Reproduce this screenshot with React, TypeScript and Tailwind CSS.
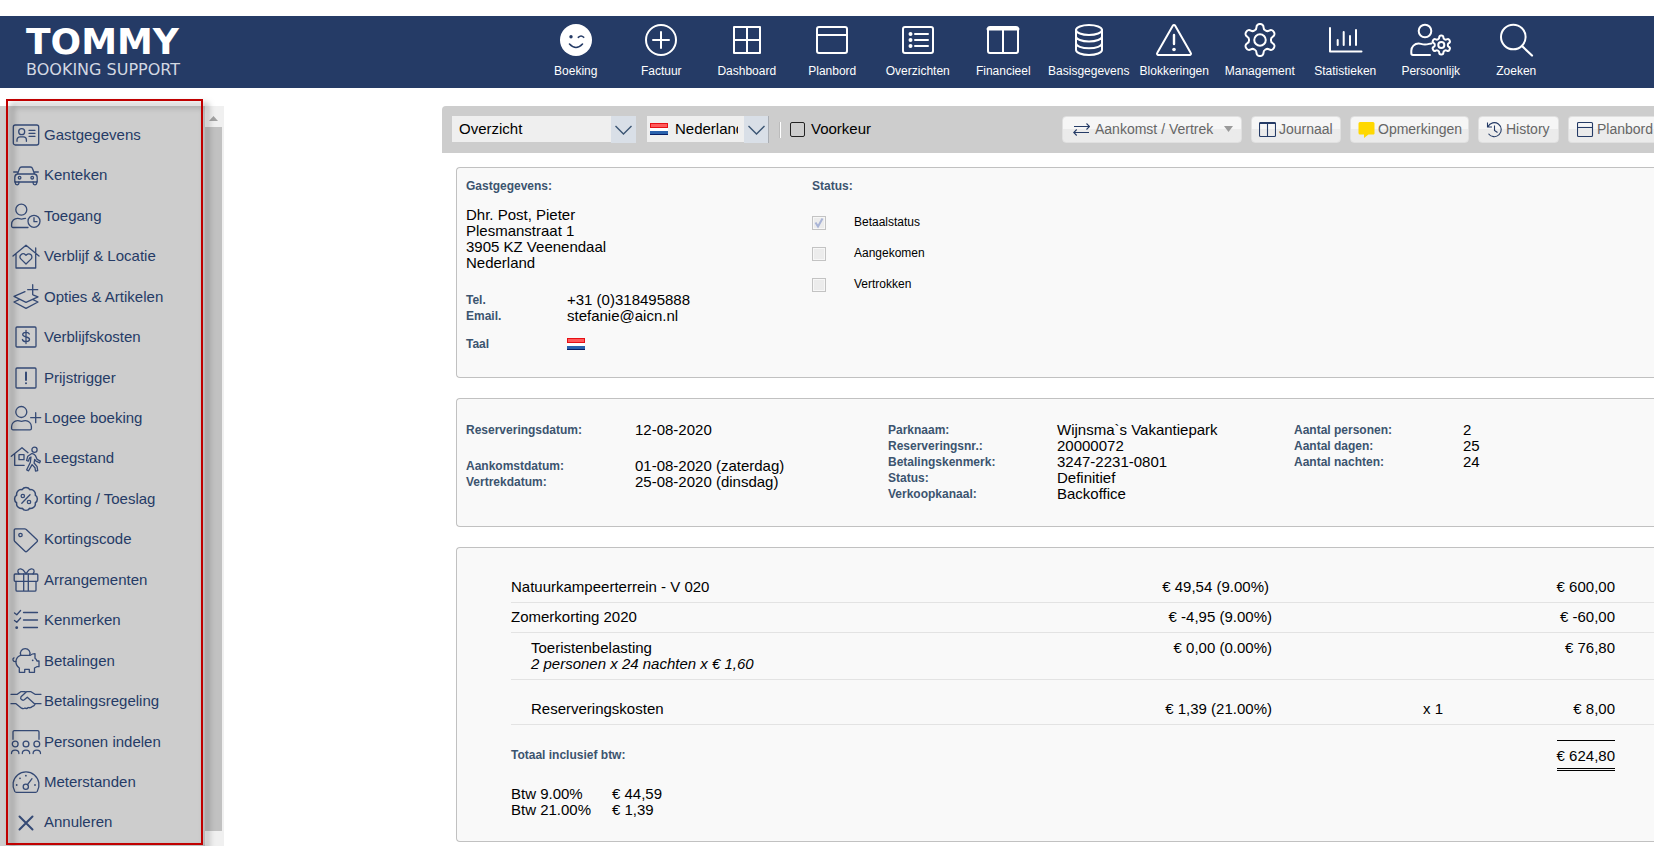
import type { ReactNode } from 'react';

const GEAR =
  'M12.22 2h-.44a2 2 0 0 0-2 2v.18a2 2 0 0 1-1 1.73l-.43.25a2 2 0 0 1-2 0l-.15-.08a2 2 0 0 0-2.73.73l-.22.38a2 2 0 0 0 .73 2.73l.15.1a2 2 0 0 1 1 1.72v.51a2 2 0 0 1-1 1.74l-.15.09a2 2 0 0 0-.73 2.73l.22.38a2 2 0 0 0 2.73.73l.15-.08a2 2 0 0 1 2 0l.43.25a2 2 0 0 1 1 1.73V20a2 2 0 0 0 2 2h.44a2 2 0 0 0 2-2v-.18a2 2 0 0 1 1-1.73l.43-.25a2 2 0 0 1 2 0l.15.08a2 2 0 0 0 2.73-.73l.22-.39a2 2 0 0 0-.73-2.73l-.15-.08a2 2 0 0 1-1-1.74v-.5a2 2 0 0 1 1-1.74l.15-.09a2 2 0 0 0 .73-2.73l-.22-.38a2 2 0 0 0-2.73-.73l-.15.08a2 2 0 0 1-2 0l-.43-.25a2 2 0 0 1-1-1.73V4a2 2 0 0 0-2-2z';

const BADGE =
  'M3.85 8.62a4 4 0 0 1 4.78-4.77 4 4 0 0 1 6.74 0 4 4 0 0 1 4.78 4.78 4 4 0 0 1 0 6.74 4 4 0 0 1-4.77 4.78 4 4 0 0 1-6.75 0 4 4 0 0 1-4.78-4.77 4 4 0 0 1 0-6.76Z';

type Item = { label: string; icon: ReactNode };

const NAV: Item[] = [
  {
    label: 'Boeking',
    icon: (
      <>
        <circle cx="16" cy="16" r="16" fill="white" stroke="none" />
        <circle cx="11" cy="12.7" r="1.7" fill="#253b66" stroke="none" />
        <path d="M18.3 13.3q2.8-2.6 5.4 0M9.500 20q6.500 7 13 0" stroke="#253b66" strokeWidth="1.6" />
      </>
    ),
  },
  { label: 'Factuur', icon: <><circle cx="16" cy="16" r="15" /><path d="M16 8v16M8 16h16" /></> },
  { label: 'Dashboard', icon: <path d="M3 3h26v26H3zM16 3v26M3 16h26" /> },
  { label: 'Planbord', icon: <><rect x="1" y="3" width="30" height="26" rx="2" /><path d="M1 11h30" /></> },
  {
    label: 'Overzichten',
    icon: (
      <>
        <rect x="1" y="3" width="30" height="26" rx="2" />
        <path d="M13 10h13M13 16h13M13 22h13" />
        <path d="M8.500 10v0M8.500 16v0M8.500 22v0" strokeWidth="4" />
      </>
    ),
  },
  {
    label: 'Financieel',
    icon: <><rect x="1" y="3" width="30" height="26" rx="2" /><path d="M1 5h30" strokeWidth="3" /><path d="M16 4v25" /></>,
  },
  {
    label: 'Basisgegevens',
    icon: (
      <>
        <ellipse cx="16" cy="6" rx="13" ry="5" />
        <path d="M3 6v20c0 2.800 5.800 5 13 5s13-2.200 13-5V6M3 12.500c0 2.800 5.800 5 13 5s13-2.200 13-5M3 19.300c0 2.800 5.800 5 13 5s13-2.200 13-5" />
      </>
    ),
  },
  {
    label: 'Blokkeringen',
    icon: (
      <>
        <path d="M14.800 1.700L-.8 29a1.300 1.300 0 0 0 1.100 2h31.400a1.300 1.300 0 0 0 1.100-2L17.200 1.700a1.400 1.400 0 0 0-2.400 0z" />
        <path d="M16 11v9" strokeWidth="2.400" />
        <path d="M16 25.500v0" strokeWidth="3.600" />
      </>
    ),
  },
  {
    label: 'Management',
    icon: <g transform="translate(-3.200 -3.200) scale(1.6)" strokeWidth="1.250"><path d={GEAR} /><circle cx="12" cy="12" r="3.600" /></g>,
  },
  { label: 'Statistieken', icon: <path d="M1 4v23.500h31.500M8.700 16v5M14.700 8v13M21 12v9M27 6v15" /> },
  {
    label: 'Persoonlijk',
    icon: (
      <>
        <circle cx="10" cy="7" r="6.300" />
        <path d="M15 31H-2a1.700 1.700 0 0 1-1.700-1.700v-2.500A7.300 7.300 0 0 1 3.600 19.500c2 0 3 1 6.400 1s4.400-1 6.400-1" />
        <g transform="translate(14.900 9.600) scale(.95)" strokeWidth="2.100"><path d={GEAR} /><circle cx="12" cy="12" r="3.200" /></g>
      </>
    ),
  },
  { label: 'Zoeken', icon: <><circle cx="13.300" cy="13" r="12.300" /><path d="M22 22l10 9.500" strokeWidth="2.200" /></> },
];

const MENU: Item[] = [
  {
    label: 'Gastgegevens',
    icon: (
      <>
        <rect x="2.300" y="4" width="25.400" height="20" rx="2" />
        <circle cx="10.700" cy="10.700" r="3" />
        <path d="M6 20.300v-1.500a3 3 0 0 1 3-3h3.400a3 3 0 0 1 3 3v1.500M18 9.300h6M18 12.300h6M18 15.300h6" />
      </>
    ),
  },
  {
    label: 'Kenteken',
    icon: (
      <>
        <path d="M6.500 12l2-5.500Q9 5 10.700 5h8.600Q21 5 21.500 6.500l2 5.500M6.500 12h17q2.700.500 2.700 3.500V20H3.800v-4.500q0-3 2.700-3.500zM2.700 10h3.600M23.700 10h3.600" />
        <path d="M4.300 20v1a1.700 1.700 0 0 0 3.600 0v-1M22.100 20v1a1.700 1.700 0 0 0 3.600 0v-1" />
        <circle cx="8.600" cy="15.700" r="1.300" />
        <circle cx="21.200" cy="15.700" r="1.300" />
      </>
    ),
  },
  {
    label: 'Toegang',
    icon: (
      <>
        <circle cx="10.300" cy="7.700" r="5.500" />
        <path d="M17 25.500H2a1.400 1.400 0 0 1-1.400-1.400v-1.800a6 6 0 0 1 6-6c1.500 0 2 .8 3.900.8s2.500-.8 4-.8" />
        <circle cx="23" cy="19.300" r="6" />
        <path d="M23 15.700v4h3" />
      </>
    ),
  },
  {
    label: 'Verblijf & Locatie',
    icon: (
      <>
        <path d="M2 13L15 2.200 28 13M5 11v14h19.700V11M24.700 9.500V5" />
        <path d="M15 21l-5-4.900a3.100 3.100 0 0 1 4.400-4.400l.6.600.6-.600a3.100 3.100 0 0 1 4.400 4.400z" />
      </>
    ),
  },
  {
    label: 'Opties & Artikelen',
    icon: <path d="M14 8.700L3 13.300l12 6 12-5.500-4.500-1.600M3 19l5-2.300M3 19l12 6.300L27 19l-5-2.300M21.700 1.700v10M16.700 6.700h10" />,
  },
  {
    label: 'Verblijfskosten',
    icon: (
      <>
        <rect x="5" y="4" width="20" height="20" rx="1" />
        <path d="M15 7.500v13M18.300 11c-.5-1.300-1.600-1.700-3.300-1.700-2 0-3.300.8-3.300 2.300 0 3.300 6.800 1.500 6.800 4.700 0 1.600-1.500 2.400-3.500 2.400s-3.200-.8-3.600-2.200" />
      </>
    ),
  },
  {
    label: 'Prijstrigger',
    icon: <><rect x="5" y="4" width="20" height="20" rx="1" /><path d="M15 8.500v7.500M15 19.300v0" strokeWidth="2" /></>,
  },
  {
    label: 'Logee boeking',
    icon: (
      <>
        <circle cx="10.300" cy="8" r="5.500" />
        <path d="M2 25.800h17a1.400 1.400 0 0 0 1.400-1.400v-1.800a6 6 0 0 0-6-6c-1.500 0-2 .8-3.900.8s-2.500-.8-3.900-.8a6 6 0 0 0-6 6v1.800A1.400 1.400 0 0 0 2 25.800zM24.700 8.700v10M19.700 13.700h10" />
      </>
    ),
  },
  {
    label: 'Leegstand',
    icon: (
      <>
        <path d="M.3 11.300L11 2.700l6 5M3.700 9v11.300h9.500" />
        <rect x="8" y="9.700" width="5" height="5" />
        <circle cx="23.500" cy="4.700" r="2.600" />
        <path d="M20.500 8.700l-3.700 2.500-1.200 4.300 1.700.7 1.400-3.500 1.300-.7-.7 5.500-3.600 7.300 1.900 1 3.500-6.200 2.900 3.200.5 3.200 2.200-.3-.6-4-3-3.700.6-3.700 1.300 1.800 3.700 1.700.7-1.700-3.200-1.700-1.700-3.700q-2-2.500-4-2z" />
      </>
    ),
  },
  {
    label: 'Korting / Toeslag',
    icon: (
      <>
        <path d={BADGE} transform="translate(1.300 .3) scale(1.140)" />
        <circle cx="11.800" cy="11" r="1.700" />
        <circle cx="18" cy="17" r="1.700" />
        <path d="M19 9.700l-8.200 8.600" />
      </>
    ),
  },
  {
    label: 'Kortingscode',
    icon: (
      <>
        <path d="M4.500 2.800h9.200q.8 0 1.300.5l11 10.500q1 1 0 2L16 25.300q-1 1-2 0L3.800 15.500q-.6-.6-.6-1.400V4.100q0-1.300 1.300-1.300z" />
        <circle cx="9.500" cy="9" r="1.700" />
      </>
    ),
  },
  {
    label: 'Arrangementen',
    icon: (
      <>
        <rect x="3.200" y="8" width="23.600" height="7.300" rx="1" />
        <path d="M5 15.300V24a1.200 1.200 0 0 0 1.200 1.200h17.600A1.200 1.200 0 0 0 25 24v-8.700M12.700 8v17M17.300 8v17M8 8C5.500 4.500 7.500 2.700 9.700 2.900 12.500 3.200 13.500 5.500 15 8c1.500-2.500 2.500-4.800 5.300-5.100 2.200-.2 4.200 1.600 1.700 5.100" />
      </>
    ),
  },
  {
    label: 'Kenmerken',
    icon: (
      <>
        <path d="M3.500 7l2.300 1.800 3.800-4.300M3.500 14.500l2.300 1.800 3.800-4.300M12.500 6.500h14M12.500 14h14M12.500 21.500h14" />
        <path d="M5.700 21.700v0" strokeWidth="2.800" />
      </>
    ),
  },
  {
    label: 'Betalingen',
    icon: (
      <>
        <path d="M9.500 8.300h9.800q2-1.600 4.700-1.600v4.600q1.500 1 2 2.700h2v5.700h-2.200L23.500 21v4.300h-5.200v-3h-4.600v3H8.300V21C5.500 19 4.700 16.500 5 14q.700-4.500 4.500-5.700z" />
        <path d="M9.700 8a4.800 4.800 0 1 1 9 0M4.800 14.500C1.500 15 1.200 11.500 3 10.800" />
        <path d="M21.700 13.300v0" strokeWidth="1.800" />
      </>
    ),
  },
  {
    label: 'Betalingsregeling',
    icon: (
      <path d="M0 7.300h6.300L9.700 4.700h4.500M30 7.300h-6l-4-2.600h-4.500L10 9.800c-1.300 2.200 1.300 4.300 3.300 3l3-2.500 7.700 7M0 16.700h5l5.500 4.500q2 1 3.500-.2 1.600 1.300 3.300-.5 2.500.8 4-1 2 0 2.700-2.800h6" />
    ),
  },
  {
    label: 'Personen indelen',
    icon: (
      <>
        <path d="M2 11.300v-7.300a1.300 1.300 0 0 1 1.300-1.300h23.400A1.300 1.300 0 0 1 28 4v7.300" />
        <circle cx="4.200" cy="16" r="2.900" />
        <circle cx="15" cy="16" r="2.900" />
        <circle cx="25.800" cy="16" r="2.900" />
        <path d="M.5 25.500c0-2 1.500-3.300 3.700-3.300s3.700 1.300 3.700 3.300M11.300 25.500c0-2 1.500-3.300 3.700-3.300s3.700 1.300 3.700 3.300M22.100 25.500c0-2 1.500-3.300 3.700-3.300s3.700 1.300 3.700 3.300" />
      </>
    ),
  },
  {
    label: 'Meterstanden',
    icon: (
      <>
        <path d="M5.300 24.300q-1 0-1.500-.8a13 13 0 1 1 22.400 0q-.5.800-1.500.8z" />
        <circle cx="14.800" cy="18.700" r="2.600" />
        <path d="M16.500 16.700l4.500-6" />
        <path d="M5.700 17v0M9 10.300v0M14.900 7.700v0M24 17v0" strokeWidth="1.800" />
      </>
    ),
  },
  { label: 'Annuleren', icon: <path d="M8.500 7.500l13 13M21.500 7.500l-13 13" strokeWidth="2" /> },
];

const STATUSES = [
  { id: 'betaalstatus', label: 'Betaalstatus', checked: true },
  { id: 'aangekomen', label: 'Aangekomen', checked: false },
  { id: 'vertrokken', label: 'Vertrokken', checked: false },
];

function Flag() {
  return (
    <svg width="18" height="12" viewBox="0 0 18 12" role="img" aria-label="Nederland" className="shrink-0">
      <path fill="#e60f14" d="M0 0h18v5H0z" />
      <path fill="#ff5a5a" d="M1 1h16v3H1z" />
      <path fill="#fff" d="M0 5h18v3H0z" />
      <path fill="#2a62ad" d="M0 8h18v4H0z" />
      <path fill="#071f66" d="M0 11h18v1H0z" />
    </svg>
  );
}

function Chevron({ className }: { className: string }) {
  return (
    <span className={`pointer-events-none absolute right-0 top-0 flex h-[27px] w-[25px] items-center justify-center bg-[#d9dfe7] ${className}`}>
      <svg width="17" height="10" viewBox="0 0 17 10" fill="none" stroke="#3b5573" strokeWidth="1.400">
        <path d="M.5 1l8 8 8-8" />
      </svg>
    </span>
  );
}

function ToolButton({ className, icon, children }: { className: string; icon: ReactNode; children: ReactNode }) {
  return (
    <button
      type="button"
      className={`flex h-[27px] shrink-0 items-center whitespace-nowrap border border-[#e0e0e0] bg-linear-to-b from-[#f6f6f6] from-50% to-[#ebebeb] to-50% pb-px text-sm text-[#666] ${className}`}
    >
      <svg width="17" height="17" viewBox="0 0 17 17" fill="none" stroke="#253b66" strokeWidth="1.100" className="shrink-0">
        {icon}
      </svg>
      {children}
    </button>
  );
}

function Field({ label, children }: { label: string; children: ReactNode }) {
  return (
    <>
      <dt className="text-xs font-bold leading-4 text-[#3c546f]">{label}</dt>
      <dd className="leading-4">{children}</dd>
    </>
  );
}

function Toolbar() {
  return (
    <div className="flex h-[47px] items-start rounded-tl bg-[#cdcdcd] pl-[10px] pt-[10px]">
      <div className="relative w-[184px] shrink-0">
        <select aria-label="Weergave" className="h-[26px] w-full appearance-none bg-[#efefef] pl-[7px] pr-[30px] outline-none">
          <option>Overzicht</option>
        </select>
        <Chevron className="" />
      </div>
      <div className="relative ml-[11px] flex h-[26px] w-[122px] shrink-0 items-center bg-[#efefef] pl-[3px]">
        <Flag />
        <select aria-label="Taal" className="h-[26px] w-[70px] appearance-none pl-[7px] outline-none">
          <option>Nederlands</option>
        </select>
        <Chevron className="border-r border-[#a9adb3]" />
      </div>
      <span className="ml-[10px] mt-[6px] h-4 w-[2px] shrink-0 border-l border-[#bcbcbc] bg-white" />
      <label className="ml-[9px] mt-[3px] flex shrink-0 items-center gap-[6px] leading-5">
        <input type="checkbox" className="size-[15px] appearance-none rounded-xs border border-[#222]" />
        Voorkeur
      </label>

      <div className="ml-auto flex gap-[9px]">
        <ToolButton
          className="w-[180px] gap-[5px] rounded-sm pl-[10px]"
          icon={<path d="M1 5.500h15.500M13.500 2.500l3 3-3 3M16 11.500H.7M3.700 8.500l-3 3 3 3" />}
        >
          Aankomst / Vertrek
          <svg width="9" height="6" viewBox="0 0 9 6" className="ml-[6px]"><path d="M0 0h9L4.500 6z" fill="#9a9a9a" /></svg>
        </ToolButton>
        <ToolButton
          className="w-[90px] gap-[3px] rounded-sm pl-[7px]"
          icon={<><rect x=".5" y="1.500" width="16" height="14" rx="1" /><path d="M1 2h15" strokeWidth="2" /><path d="M8.500 2v13" /></>}
        >
          Journaal
        </ToolButton>
        <ToolButton
          className="w-[119px] gap-[3px] rounded-sm pl-[7px]"
          icon={<path d="M2 1h13a1.500 1.500 0 0 1 1.500 1.500v9A1.500 1.500 0 0 1 15 13.500h-4.500L6 17v-3.500H2A1.500 1.500 0 0 1 .5 12V2.500A1.500 1.500 0 0 1 2 1z" fill="#ffd800" stroke="none" />}
        >
          Opmerkingen
        </ToolButton>
        <ToolButton
          className="w-[81px] gap-[3px] rounded-sm pl-[7px]"
          icon={<path d="M2 5.500a7 7 0 1 1 .5 7.200M1.500 1.500V6H6M8.500 4.500v5l3 2" />}
        >
          History
        </ToolButton>
        <ToolButton
          className="w-[86px] gap-[3px] rounded-l-sm border-r-0 pl-[8px]"
          icon={<><rect x=".5" y="1.500" width="15" height="14" rx="1" /><path d="M1 6.500h15" /></>}
        >
          Planbord
        </ToolButton>
      </div>
    </div>
  );
}

function GuestCard() {
  return (
    <section className="flex rounded-l border border-r-0 border-[#c1c1c1] bg-[#f9f9f9] pb-[25px] pl-[9px] pt-[10px]">
      <div className="w-[346px] shrink-0">
        <h2 className="text-xs font-bold leading-4 text-[#3c546f]">Gastgegevens:</h2>
        <address className="mt-[13px] not-italic leading-4">
          Dhr. Post, Pieter<br />
          Plesmanstraat 1<br />
          3905 KZ Veenendaal<br />
          Nederland
        </address>
        <dl className="mt-[21px] grid grid-cols-[101px_1fr]">
          <Field label="Tel.">+31 (0)318495888</Field>
          <Field label="Email.">stefanie@aicn.nl</Field>
        </dl>
        <dl className="mt-3 grid grid-cols-[101px_1fr]">
          <Field label="Taal"><span className="flex h-4 items-center"><Flag /></span></Field>
        </dl>
      </div>
      <fieldset>
        <legend className="text-xs font-bold leading-4 text-[#3c546f]">Status:</legend>
        <div className="mt-5 flex flex-col gap-[15px]">
          {STATUSES.map(s => (
            <div key={s.id} className="flex h-4 items-start">
              <span className="relative mt-[2px] flex">
                <input
                  id={s.id}
                  type="checkbox"
                  disabled
                  checked={s.checked}
                  readOnly
                  className="size-[14px] appearance-none border border-[#c3c3c3] bg-[#ececec] shadow-[inset_0_0_0_1px_#f7f7f7]"
                />
                {s.checked && (
                  <svg width="14" height="14" viewBox="0 0 14 14" className="pointer-events-none absolute left-0 top-0" fill="none" stroke="#a9b4d6" strokeWidth="2">
                    <path d="M3.500 6.500L6 10.500l4.500-8" />
                  </svg>
                )}
              </span>
              <label htmlFor={s.id} className="ml-7 text-xs">{s.label}</label>
            </div>
          ))}
        </div>
      </fieldset>
    </section>
  );
}

function ReservationCard() {
  return (
    <section className="flex rounded-l border border-r-0 border-[#c1c1c1] bg-[#f9f9f9] pb-6 pl-[9px] pt-[23px]">
      <div className="w-[422px] shrink-0">
        <dl className="grid grid-cols-[169px_1fr]">
          <Field label="Reserveringsdatum:">12-08-2020</Field>
        </dl>
        <dl className="mt-5 grid grid-cols-[169px_1fr]">
          <Field label="Aankomstdatum:">01-08-2020 (zaterdag)</Field>
          <Field label="Vertrekdatum:">25-08-2020 (dinsdag)</Field>
        </dl>
      </div>
      <dl className="grid w-[406px] shrink-0 grid-cols-[169px_1fr]">
        <Field label="Parknaam:">Wijnsma`s Vakantiepark</Field>
        <Field label="Reserveringsnr.:">20000072</Field>
        <Field label="Betalingskenmerk:">3247-2231-0801</Field>
        <Field label="Status:">Definitief</Field>
        <Field label="Verkoopkanaal:">Backoffice</Field>
      </dl>
      <dl className="grid grid-cols-[169px_1fr] content-start">
        <Field label="Aantal personen:">2</Field>
        <Field label="Aantal dagen:">25</Field>
        <Field label="Aantal nachten:">24</Field>
      </dl>
    </section>
  );
}

function CostsCard() {
  return (
    <section className="rounded-l border border-r-0 border-[#c1c1c1] bg-[#f9f9f9] pb-[23px] pl-[54px] pt-[25px]">
      <table className="w-full table-fixed border-separate border-spacing-0 leading-4 [&_td]:align-top">
        <colgroup>
          <col />
          <col className="w-[200px]" />
          <col className="w-[171px]" />
          <col className="w-[172px]" />
          <col className="w-[39px]" />
        </colgroup>
        <tbody className="[&_td]:border-b [&_td]:border-[#e3e3e3] [&_td]:pb-[7px] [&_td]:pt-[6px]">
          <tr>
            <td>Natuurkampeerterrein - V 020</td>
            <td className="pr-[3px] text-right">€ 49,54 (9.00%)</td>
            <td />
            <td className="text-right">€ 600,00</td>
            <td />
          </tr>
          <tr>
            <td>Zomerkorting 2020</td>
            <td className="text-right">€ -4,95 (9.00%)</td>
            <td />
            <td className="text-right">€ -60,00</td>
            <td />
          </tr>
          <tr className="[&>td]:pt-[7px]!">
            <td>
              <div className="pl-5">Toeristenbelasting<br /><em>2 personen x 24 nachten x € 1,60</em></div>
            </td>
            <td className="text-right">€ 0,00 (0.00%)</td>
            <td />
            <td className="text-right">€ 76,80</td>
            <td />
          </tr>
          <tr className="[&>td]:pt-[21px]!">
            <td><div className="pl-5">Reserveringskosten</div></td>
            <td className="text-right">€ 1,39 (21.00%)</td>
            <td className="text-right">x 1</td>
            <td className="text-right">€ 8,00</td>
            <td />
          </tr>
        </tbody>
        <tfoot>
          <tr>
            <th scope="row" colSpan={3} className="pt-[22px] text-left align-top text-xs font-bold leading-4 text-[#3c546f]">
              Totaal inclusief btw:
            </th>
            <td className="pt-[15px] text-right">
              <span className="inline-block border-b-3 border-t border-double border-black pb-[4px] pt-[7px] align-top [border-top-style:solid]">
                € 624,80
              </span>
            </td>
            <td />
          </tr>
        </tfoot>
      </table>
      <dl className="mt-[15px] grid grid-cols-[101px_1fr] leading-4">
        <dt>Btw 9.00%</dt>
        <dd>€ 44,59</dd>
        <dt>Btw 21.00%</dt>
        <dd>€ 1,39</dd>
      </dl>
    </section>
  );
}

export default function App() {
  return (
    <div className="overflow-hidden bg-white pt-4 font-['Liberation_Sans',Arial,sans-serif] text-[15px] text-black">
      <header className="flex h-[72px] justify-between bg-[#253b66] pl-[26px] pr-[95px] text-white">
        <a href="#" className="flex flex-col pt-2 font-['DejaVu_Sans',sans-serif]">
          <span className="text-4xl font-bold leading-9">TOMMY</span>
          <span className="text-base leading-5 text-[#d3d8e2]">BOOKING SUPPORT</span>
        </a>
        <nav className="grid w-[1026px] grid-cols-12">
          {NAV.map(item => (
            <a key={item.label} href="#" className="flex flex-col items-center pt-2 text-xs">
              <svg
                width="32"
                height="32"
                viewBox="0 0 32 32"
                fill="none"
                stroke="currentColor"
                strokeWidth="2"
                strokeLinecap="round"
                strokeLinejoin="round"
                className="overflow-visible"
              >
                {item.icon}
              </svg>
              <span className="mt-[7px]">{item.label}</span>
            </a>
          ))}
        </nav>
      </header>

      <div className="flex pt-[18px]">
        <aside className="relative flex h-[calc(100vh-106px)] w-[224px] shrink-0">
          <ul className="flex w-[205px] flex-col bg-[#cdcdcd] pb-[3px] pl-[11px] pt-[9px]">
            {MENU.map(item => (
              <li key={item.label} className="flex flex-1 items-center">
                <a href="#" className="flex items-center gap-[3px] text-[#253b66]">
                  <svg
                    width="30"
                    height="28"
                    viewBox="0 0 30 28"
                    fill="none"
                    stroke="#354a75"
                    strokeWidth="1.300"
                    strokeLinecap="round"
                    strokeLinejoin="round"
                    className="overflow-visible"
                  >
                    {item.icon}
                  </svg>
                  {item.label}
                </a>
              </li>
            ))}
          </ul>
          <div className="flex w-[19px] flex-col bg-[#f0f0f0] pb-[15px]">
            <div className="flex h-[21px] shrink-0 items-center pl-1 pt-[3px]">
              <svg width="9" height="5" viewBox="0 0 9 5"><path d="M0 5h9L4.500 0z" fill="#a3a3a3" /></svg>
            </div>
            <div className="w-[17px] flex-1 bg-[#c1c1c1]" />
          </div>
          <div className="pointer-events-none absolute -top-[7px] bottom-px left-[6px] w-[197px] border-2 border-[#c00000] drop-shadow-[5px_5px_3px_rgba(0,0,0,0.5)]" />
        </aside>

        <main className="ml-[218px] min-w-0 flex-1">
          <Toolbar />
          <div className="flex flex-col gap-5 pb-1 pl-[14px] pt-[14px]">
            <GuestCard />
            <ReservationCard />
            <CostsCard />
          </div>
        </main>
      </div>
    </div>
  );
}
